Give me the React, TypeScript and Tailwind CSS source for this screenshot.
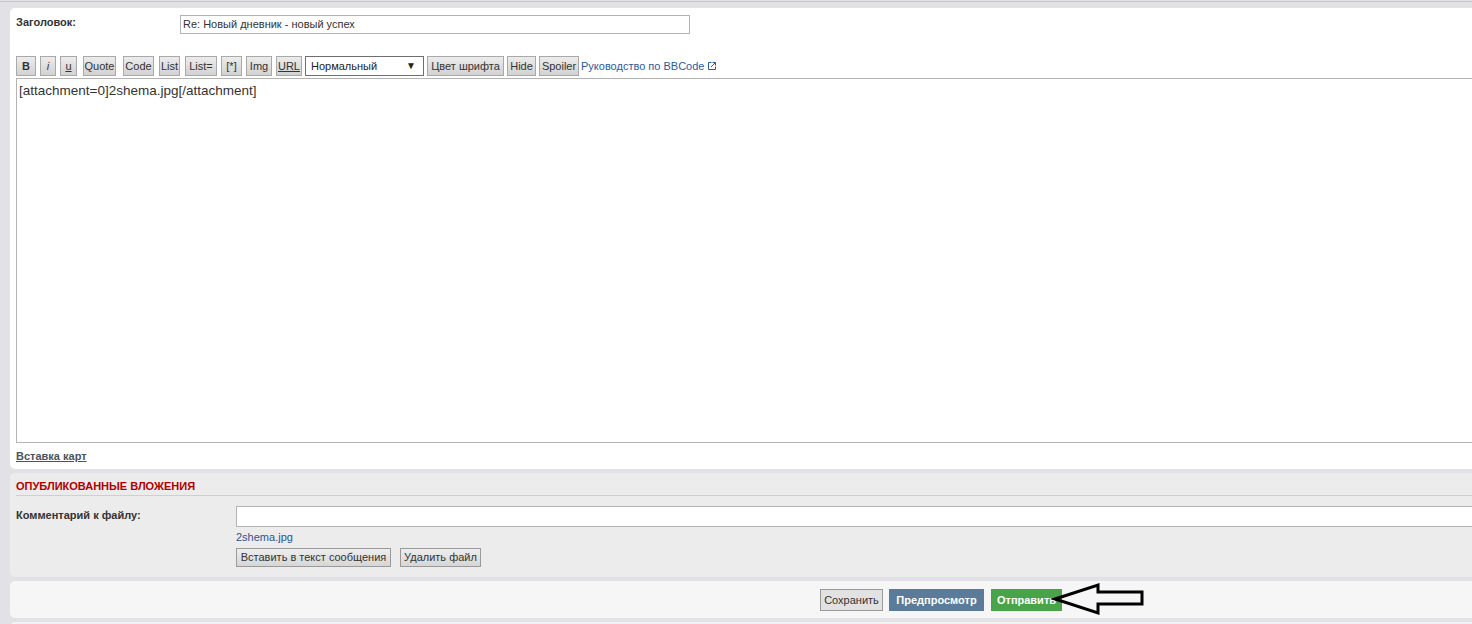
import React from 'react';

const font = "font-['Tahoma','Liberation_Sans',Arial,sans-serif]";

type ToolBtnProps = {
  label: string;
  w: string;
  extra?: string;
};

function ToolBtn({ label, w, extra = '' }: ToolBtnProps) {
  return (
    <div
      className={`${w} h-[20px] shrink-0 flex items-center justify-center border border-[#a9a9a9] bg-gradient-to-b from-[#ececec] to-[#d2d2d2] text-[11px] text-[#333] leading-none ${extra}`}
    >
      {label}
    </div>
  );
}

function GrayBtn({ label, w }: { label: string; w: string }) {
  return (
    <div
      className={`${w} h-[19px] flex items-center justify-center border border-[#9a9a9a] bg-gradient-to-b from-[#eeeeee] to-[#d6d6d6] text-[11px] text-[#333] leading-none`}
    >
      {label}
    </div>
  );
}

export default function App() {
  return (
    <div className={`relative w-[1472px] h-[624px] overflow-hidden bg-[#e1e1e6] ${font}`}>
      {/* top strip */}
      <div className="h-[8px] pt-[1px]">
        <div className="border-t border-[#c6c6ca]" />
      </div>

      {/* editor panel */}
      <div className="ml-[10px] w-[1500px] h-[461px] bg-white rounded-l-[5px] px-[6px] pt-[7px]">
        <div className="flex">
          <div className="w-[164px] shrink-0 pt-[1px] text-[11px] font-bold text-[#333] leading-[13px]">Заголовок:</div>
          <div className="w-[510px] h-[19px] border border-[#b3b3b3] px-[2px] text-[11px] leading-[17px] text-[#333]">
            Re: Новый дневник - новый успех
          </div>
        </div>

        {/* toolbar */}
        <div className="mt-[22px] flex items-center h-[20px]">
          <ToolBtn label="B" w="w-[20px]" extra="font-bold" />
          <ToolBtn label="i" w="w-[16px]" extra="italic ml-[4px]" />
          <ToolBtn label="u" w="w-[17px]" extra="underline ml-[4px]" />
          <ToolBtn label="Quote" w="w-[33px]" extra="ml-[6px]" />
          <ToolBtn label="Code" w="w-[31px]" extra="ml-[7px]" />
          <ToolBtn label="List" w="w-[21px]" extra="ml-[5px]" />
          <ToolBtn label="List=" w="w-[32px]" extra="ml-[5px]" />
          <ToolBtn label="[*]" w="w-[21px]" extra="ml-[4px]" />
          <ToolBtn label="Img" w="w-[26px]" extra="ml-[4px]" />
          <ToolBtn label="URL" w="w-[26px]" extra="underline ml-[4px]" />
          <div className="w-[119px] ml-[3px] shrink-0 h-[20px] flex items-center justify-between border border-[#6f6f6f] bg-white pl-[5px] pr-[7px] text-[11px] text-[#222] leading-none">
            <span>Нормальный</span>
            <span className="text-[10px]">▼</span>
          </div>
          <ToolBtn label="Цвет шрифта" w="w-[77px]" extra="ml-[3px]" />
          <ToolBtn label="Hide" w="w-[29px]" extra="ml-[3px]" />
          <ToolBtn label="Spoiler" w="w-[40px]" extra="ml-[3px]" />
          <a className="ml-[2px] flex items-center gap-[3px] text-[11px] text-[#2a5ba0] leading-none">
            Руководство по BBCode
            <svg width="10" height="10" viewBox="0 0 10 10" fill="none" stroke="#2a5ba0" strokeWidth="1">
              <path d="M4.5 1.5H1.5V8.5H8.5V5.5" />
              <path d="M5.5 1.5H8.5V4.5" />
              <path d="M8.5 1.5L4 6" />
            </svg>
          </a>
        </div>

        {/* text area */}
        <div className="mt-[2px] h-[365px] border border-[#b3b3b3] px-[2px] pt-[4px] text-[13.5px] text-[#333] leading-[16px]">
          [attachment=0]2shema.jpg[/attachment]
        </div>

        <div className="mt-[7px] text-[11px] font-bold text-[#4b535b] underline leading-[13px]">Вставка карт</div>
      </div>

      {/* attachments panel */}
      <div className="mt-[4px] ml-[10px] w-[1500px] h-[104px] bg-[#ececec] rounded-l-[5px] px-[6px]">
        <div className="pt-[7px] pb-[2px] border-b border-[#cfcfcf] text-[11px] font-bold text-[#b00000] leading-[13px]">
          ОПУБЛИКОВАННЫЕ ВЛОЖЕНИЯ
        </div>
        <div className="mt-[10px] flex">
          <div className="w-[220px] shrink-0 pt-[3px] text-[11px] font-bold text-[#333] leading-[13px]">Комментарий к файлу:</div>
          <div className="flex flex-col">
            <div className="w-[1300px] h-[21px] border border-[#b3b3b3] bg-white" />
            <div className="mt-[4px] text-[11px] text-[#2a5395] leading-[13px]">2shema.jpg</div>
            <div className="mt-[4px] flex gap-[9px]">
              <GrayBtn label="Вставить в текст сообщения" w="w-[155px]" />
              <GrayBtn label="Удалить файл" w="w-[81px]" />
            </div>
          </div>
        </div>
      </div>

      {/* submit panel */}
      <div className="mt-[4px] ml-[10px] w-[1500px] h-[37px] bg-[#f6f6f6] rounded-l-[5px] pl-[810px] pt-[8px] flex gap-[6px]">
        <div className="w-[63px] h-[22px] flex items-center justify-center border border-[#9a9a9a] bg-[#e2e2e2] text-[11px] text-[#333] leading-none">
          Сохранить
        </div>
        <div className="w-[95px] h-[22px] flex items-center justify-center bg-[#5a7b9a] text-[11px] font-bold text-white leading-none">
          Предпросмотр
        </div>
        <div className="w-[71px] h-[22px] ml-[1px] flex items-center justify-center bg-[#49a449] text-[11px] font-bold text-white leading-none">
          Отправить
        </div>
      </div>

      <div className="mt-[4px] ml-[10px] w-[1500px] h-[20px] bg-[#f2f2f2] rounded-l-[5px]" />

      {/* hand-drawn arrow */}
      <svg className="absolute left-[1050px] top-[582px]" width="96" height="34" viewBox="0 0 96 34" fill="none">
        <path
          d="M5 17 L48 3 L48 10 L92 10 L92 22 L48 22 L48 31 Z"
          stroke="#000"
          strokeWidth="3"
          strokeLinejoin="miter"
        />
      </svg>
    </div>
  );
}
